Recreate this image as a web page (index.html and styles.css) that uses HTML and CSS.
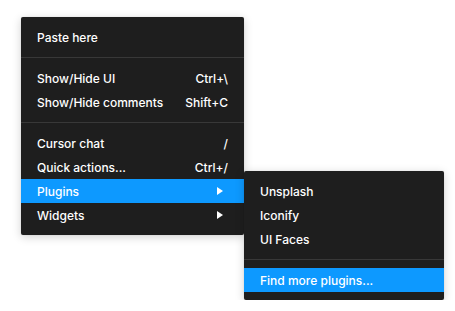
FILE: index.html
```html
<!DOCTYPE html>
<html>
<head>
    <title>Context menu</title>
    <link rel="stylesheet" href="styles.css">
</head>

<body>
    <div class="menus">
        <div class="menu main-menu">
            <div class="item"><span>Paste here</span></div>
            <div class="separator"></div>
            <div class="item"><span>Show/Hide UI</span><span class="shortcut">Ctrl+\</span></div>
            <div class="item"><span>Show/Hide comments</span><span class="shortcut">Shift+C</span></div>
            <div class="separator"></div>
            <div class="item"><span>Cursor chat</span><span class="shortcut">/</span></div>
            <div class="item"><span>Quick actions...</span><span class="shortcut">Ctrl+/</span></div>
            <div class="item active"><span>Plugins</span><span class="arrow"></span></div>
            <div class="item"><span>Widgets</span><span class="arrow"></span></div>
        </div>
        <div class="menu submenu">
            <div class="item"><span>Unsplash</span></div>
            <div class="item"><span>Iconify</span></div>
            <div class="item"><span>UI Faces</span></div>
            <div class="separator"></div>
            <div class="item active"><span>Find more plugins...</span></div>
        </div>
    </div>
</body>
</html>
```

FILE: styles.css
```css
body {
    font-family: Inter, "Noto Sans", sans-serif;
    margin: 0;
    padding: 17px 0 0 21px;
    background-color: #ffffff;
}
.menus {
    display: flex;
    align-items: flex-start;
}
.menu {
    background-color: #1e1e1e;
    color: #ffffff;
    font-size: 12px;
    font-weight: 500;
    padding: 8px 0;
    border-radius: 2px;
    box-shadow: 0px 2px 10px 0px rgba(0, 0, 0, 0.18), 0px 0px 1px 0px rgba(0, 0, 0, 0.2);
}
.main-menu {
    width: 223px;
}
.submenu {
    width: 200px;
    margin-top: 154px;
}
.item {
    display: flex;
    justify-content: space-between;
    align-items: center;
    height: 24px;
    padding: 0 16px;
    white-space: nowrap;
}
.item.active {
    background-color: #0d99ff;
}
.separator {
    height: 1px;
    margin: 8px 0;
    background-color: #383838;
}
.arrow {
    width: 0;
    height: 0;
    margin-right: 5px;
    border-top: 4px solid transparent;
    border-bottom: 4px solid transparent;
    border-left: 6px solid #ffffff;
}
```
